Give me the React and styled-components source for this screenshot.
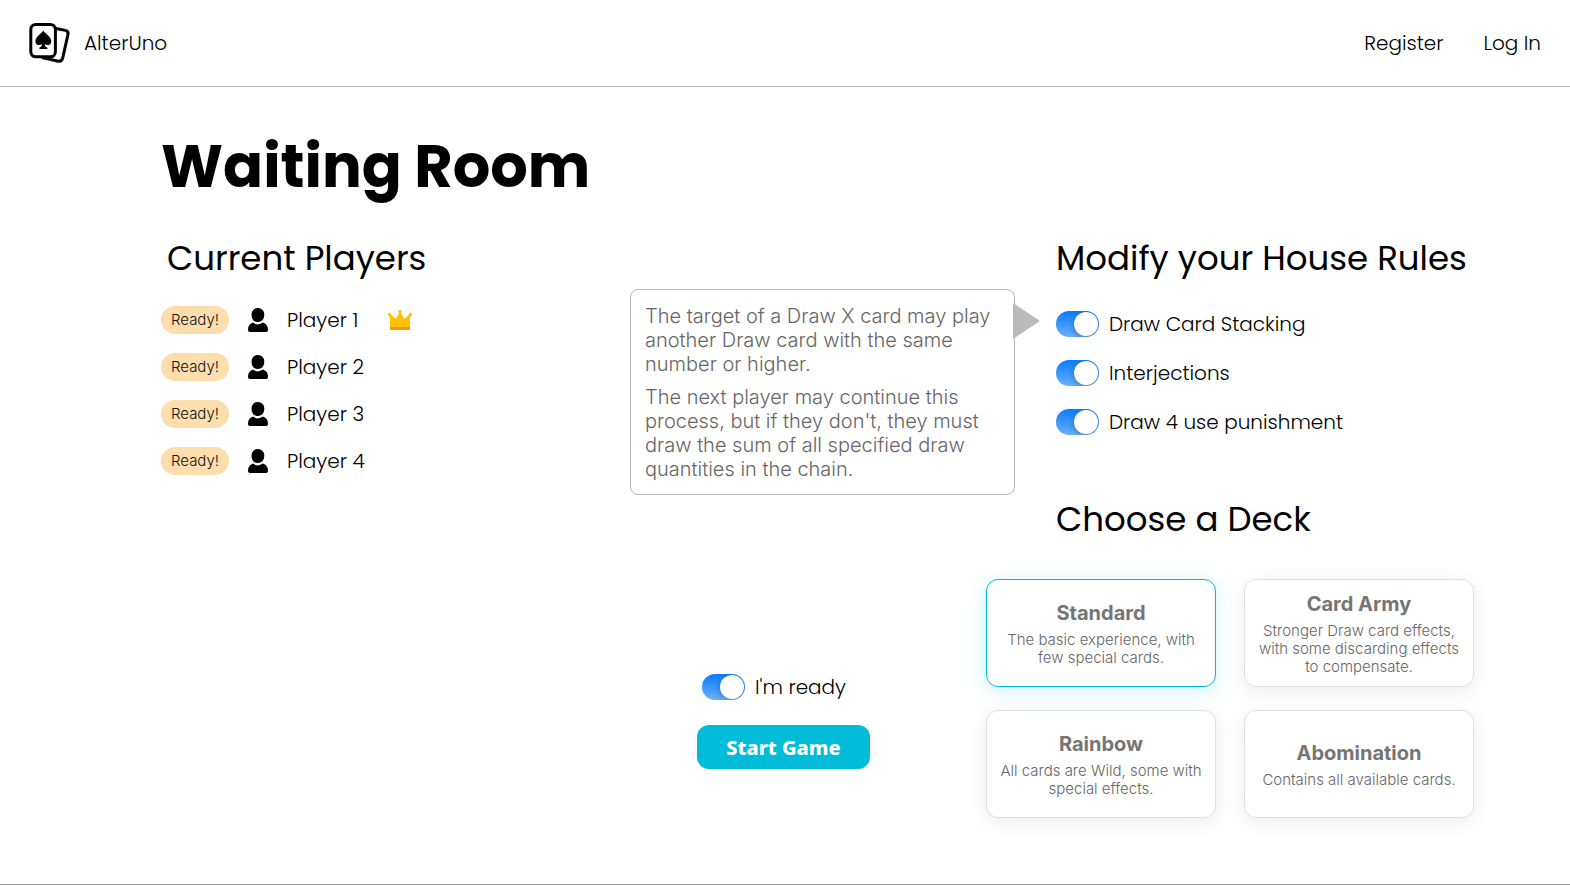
import React, { useState } from "react";
import styled, { createGlobalStyle } from "styled-components";

const GlobalStyle = createGlobalStyle`
  *, *::before, *::after { box-sizing: border-box; }
  body {
    margin: 0;
    background: #fff;
    color: #000;
    font-family: Poppins, "Open Sans", sans-serif;
    font-size: 20px;
    font-weight: 300;
    line-height: 30px;
  }
`;

const Page = styled.div`
  min-height: 100vh;
  display: flex;
  flex-direction: column;
  border-bottom: 1px solid #999;
`;

const Header = styled.header`
  display: flex;
  align-items: center;
  justify-content: space-between;
  height: 87px;
  padding: 0 29px;
  border-bottom: 1px solid #bbb;
`;

const NavLink = styled.a`
  display: flex;
  align-items: center;
  gap: 13px;
  color: inherit;
  text-decoration: none;
`;

const Nav = styled.nav`
  display: flex;
  gap: 40px;
`;

const Main = styled.main`
  flex: 1;
  padding: 40px 96px 48px 161px;
`;

const Title = styled.h1`
  margin: 0 0 24px;
  font-size: 59px;
  font-weight: 700;
  line-height: 80px;
`;

const Columns = styled.div`
  display: grid;
  grid-template-columns: minmax(0, 1fr) 173px 488px;
  column-gap: 116px;
`;

const SectionTitle = styled.h2`
  margin: 0;
  font-size: 34px;
  font-weight: 400;
  line-height: 54px;
  white-space: nowrap;
`;

const Players = styled.section`
  ${SectionTitle} { padding-left: 6px; }
`;

const PlayerList = styled.ul`
  display: grid;
  row-gap: 17px;
  margin: 20px 0 0;
  padding: 0;
  list-style: none;
`;

const PlayerRow = styled.li`
  display: flex;
  align-items: center;
`;

const Badge = styled.span`
  width: 68px;
  margin-right: 19px;
  border-radius: 14px;
  background: #ffdeae;
  color: #111;
  font-family: Inter, sans-serif;
  font-size: 15px;
  line-height: 28px;
  text-align: center;
`;

const PlayerName = styled.span`
  width: 101px;
  margin-left: 19px;
`;

const ReadyPanel = styled.section`
  align-self: end;
  display: grid;
  row-gap: 23px;
  padding-bottom: 49px;
`;

const ToggleLabel = styled.label`
  display: flex;
  align-items: center;
  gap: 10px;
  padding-left: ${(p) => p.$inset || 0}px;
  white-space: nowrap;
  cursor: pointer;
`;

const Switch = styled.input`
  appearance: none;
  flex: none;
  display: flex;
  align-items: center;
  width: 43px;
  height: 26px;
  margin: 0;
  padding: 0 1px;
  border-radius: 13px;
  background: #ccc;
  cursor: pointer;
  overflow: hidden;
  &::before {
    content: "";
    width: 24px;
    height: 24px;
    border-radius: 50%;
    background: #fff;
    box-shadow: 0 2px 6px rgba(0, 0, 0, 0.3);
  }
  &:checked {
    justify-content: flex-end;
    background: linear-gradient(#0a7cff, #6bb0fb);
  }
`;

const StartButton = styled.button`
  height: 44px;
  border: 0;
  border-radius: 12px;
  background: #00bcd8;
  color: #fff;
  font-family: "Noto Sans", sans-serif;
  font-size: 20px;
  font-weight: 800;
  cursor: pointer;
`;

const Setup = styled.div`
  ${SectionTitle} { padding-left: 70px; }
`;

const RuleList = styled.div`
  display: grid;
  row-gap: 19px;
  margin: 24px 0 55px;
  padding-left: 70px;
`;

const RuleItem = styled.div`
  position: relative;
`;

const Tooltip = styled.div`
  position: absolute;
  top: -20px;
  right: calc(100% + 41px);
  width: 385px;
  padding: 14px 14px 13px;
  border: 1px solid #b8b8b8;
  border-radius: 8px;
  background: #fff;
  color: #666;
  font-family: Inter, sans-serif;
  font-size: 20px;
  font-weight: 300;
  line-height: 24px;
  p { margin: 0; }
  p + p { margin-top: 9px; }
  &::after {
    content: "";
    position: absolute;
    top: 13px;
    left: calc(100% - 1px);
    border: solid transparent;
    border-width: 18px 0 18px 27px;
    border-left-color: #bbb;
  }
`;

const DeckGrid = styled.div`
  display: grid;
  grid-template-columns: 1fr 1fr;
  gap: 23px 28px;
  margin-top: 33px;
`;

const DeckCard = styled.label`
  position: relative;
  display: flex;
  flex-direction: column;
  align-items: center;
  justify-content: center;
  min-height: 108px;
  padding: 0 10px;
  border: 1px solid ${(p) => (p.$selected ? "#00bcd8" : "#e0e0e0")};
  border-radius: 12px;
  background: #fff;
  box-shadow: 0 4px 20px ${(p) => (p.$selected ? "rgba(0, 188, 216, 0.2)" : "rgba(0, 0, 0, 0.08)")};
  color: #757575;
  font-family: Inter, sans-serif;
  text-align: center;
  cursor: pointer;
  input {
    position: absolute;
    opacity: 0;
    pointer-events: none;
  }
`;

const DeckName = styled.strong`
  font-size: 20px;
  font-weight: 700;
  line-height: 28px;
  margin-bottom: 4px;
`;

const DeckText = styled.span`
  color: #666;
  font-size: 15px;
  font-weight: 300;
  line-height: 18px;
`;

const Logo = () => (
  <svg width="42" height="42" viewBox="0 0 42 42" fill="none" stroke="#000" strokeWidth="3" strokeLinejoin="round" aria-hidden="true">
    <path d="M27 6.5 36.3 8.4Q39.7 9.2 39 12.4L33.8 35.6Q32.8 39.8 29.4 39.2L13 35.6" />
    <rect x="1.8" y="2.4" width="24.6" height="32.4" rx="5" fill="#fff" />
    <path stroke="none" fill="#000" d="M14.3 8.5C16 11.5 22.3 14.6 22.3 19.2C22.3 23 18 24.2 15.8 22C15.9 24 16.4 25 18.3 25.6V27H10.4V25.6C12.3 25 12.8 24 12.9 22C10.6 24.2 6.4 23 6.4 19.2C6.4 14.6 12.6 11.5 14.3 8.5Z" />
  </svg>
);

const PersonIcon = () => (
  <svg width="20" height="24" viewBox="0 0 20 24" aria-hidden="true">
    <rect x="3.6" y="0" width="12.6" height="14" rx="6.2" />
    <path d="M5.2 14.6Q10 18.2 14.8 14.6C18 15.6 20 18.2 20 21.4Q20 24 17.4 24H2.6Q0 24 0 21.4C0 18.2 2 15.6 5.2 14.6Z" />
  </svg>
);

const CrownIcon = () => (
  <svg width="24" height="20" viewBox="0 0 24 20" role="img" aria-label="Host">
    <path fill="#ffc107" d="M2 17V7.5L.6 5.4A1.5 1.5 0 1 1 3 4.6L7.6 8.8 11.2 3A1.6 1.6 0 1 1 12.9 3L16.4 8.8 21 4.6A1.5 1.5 0 1 1 23.4 5.4L22 7.5V17Z" />
    <rect x="2" y="17" width="20" height="3" fill="#ff9800" />
  </svg>
);

const players = ["Player 1", "Player 2", "Player 3", "Player 4"];
const rules = ["Draw Card Stacking", "Interjections", "Draw 4 use punishment"];
const decks = [
  { name: "Standard", text: "The basic experience, with few special cards." },
  { name: "Card Army", text: "Stronger Draw card effects, with some discarding effects to compensate." },
  { name: "Rainbow", text: "All cards are Wild, some with special effects." },
  { name: "Abomination", text: "Contains all available cards." },
];

const Toggle = ({ children, inset }) => (
  <ToggleLabel $inset={inset}>
    <Switch type="checkbox" role="switch" defaultChecked />
    {children}
  </ToggleLabel>
);

export default function App() {
  const [deck, setDeck] = useState("Standard");
  return (
    <Page>
      <GlobalStyle />
      <Header>
        <NavLink href="#home"><Logo />AlterUno</NavLink>
        <Nav>
          <NavLink href="#register">Register</NavLink>
          <NavLink href="#login">Log In</NavLink>
        </Nav>
      </Header>
      <Main>
        <Title>Waiting Room</Title>
        <Columns>
          <Players>
            <SectionTitle>Current Players</SectionTitle>
            <PlayerList>
              {players.map((name, i) => (
                <PlayerRow key={name}>
                  <Badge>Ready!</Badge>
                  <PersonIcon />
                  <PlayerName>{name}</PlayerName>
                  {i === 0 && <CrownIcon />}
                </PlayerRow>
              ))}
            </PlayerList>
          </Players>
          <ReadyPanel>
            <Toggle inset={5}>I'm ready</Toggle>
            <StartButton type="button">Start Game</StartButton>
          </ReadyPanel>
          <Setup>
            <SectionTitle>Modify your House Rules</SectionTitle>
            <RuleList>
              {rules.map((rule, i) => (
                <RuleItem key={rule}>
                  <Toggle>{rule}</Toggle>
                  {i === 0 && (
                    <Tooltip role="tooltip">
                      <p>The target of a Draw X card may play another Draw card with the same number or higher.</p>
                      <p>The next player may continue this process, but if they don't, they must draw the sum of all specified draw quantities in the chain.</p>
                    </Tooltip>
                  )}
                </RuleItem>
              ))}
            </RuleList>
            <SectionTitle>Choose a Deck</SectionTitle>
            <DeckGrid>
              {decks.map(({ name, text }) => (
                <DeckCard key={name} $selected={deck === name}>
                  <input type="radio" name="deck" checked={deck === name} onChange={() => setDeck(name)} />
                  <DeckName>{name}</DeckName>
                  <DeckText>{text}</DeckText>
                </DeckCard>
              ))}
            </DeckGrid>
          </Setup>
        </Columns>
      </Main>
    </Page>
  );
}
